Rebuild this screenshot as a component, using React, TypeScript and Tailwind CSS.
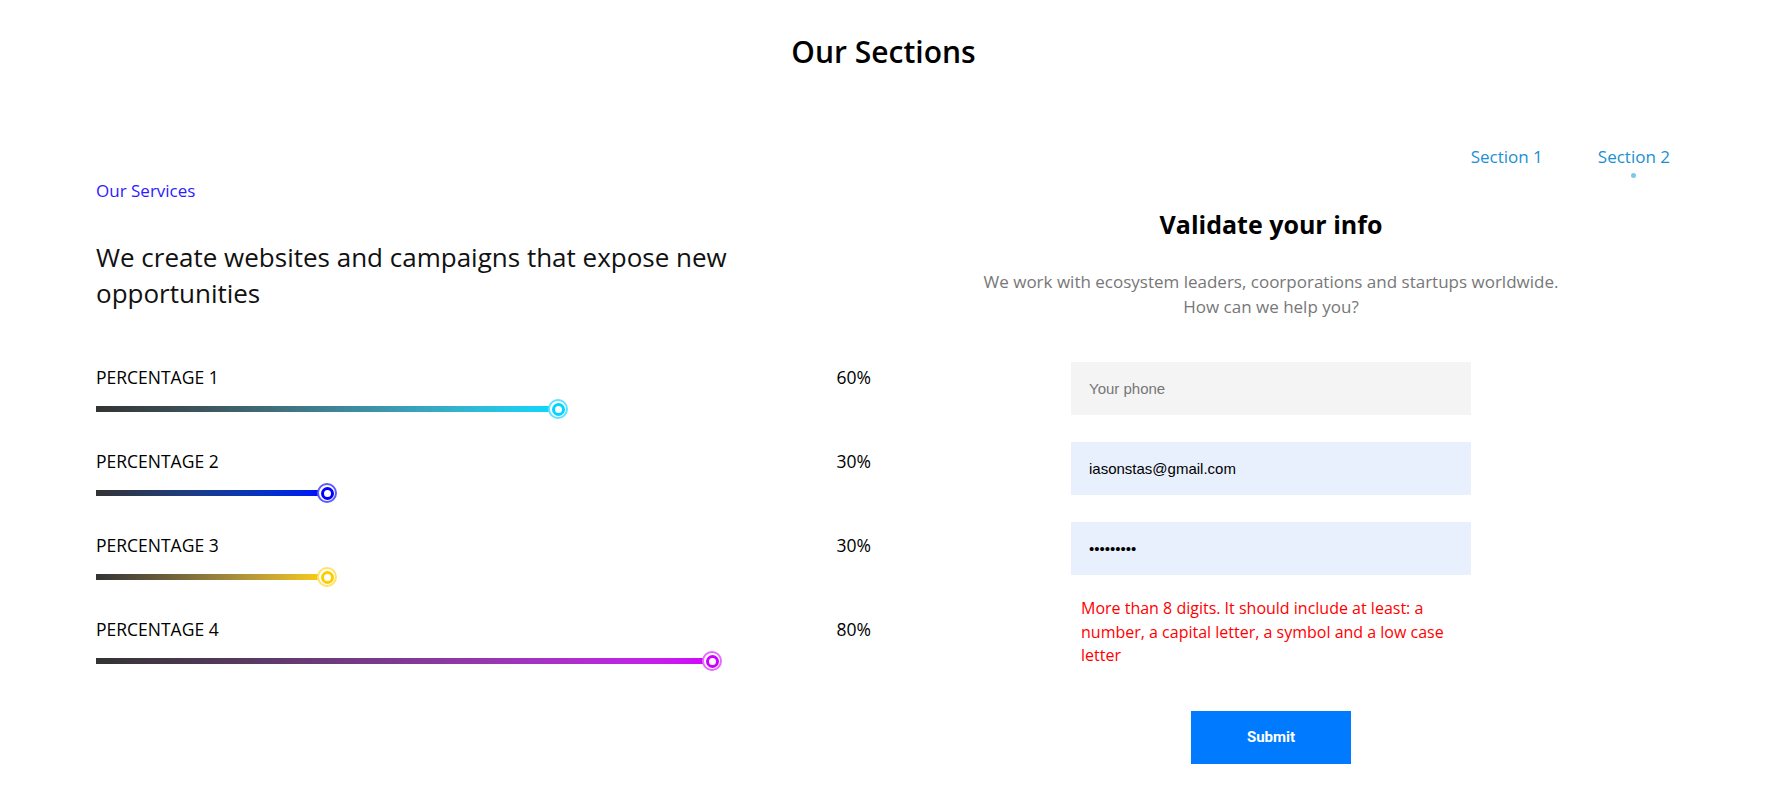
import React from "react";

type Item = { label: string; pct: number; bar: string; ring: string; inner: string };

const items: Item[] = [
  {
    label: "PERCENTAGE 1",
    pct: 60,
    bar: "bg-linear-to-r from-[#333333] to-[#00d9ff]",
    ring: "border-[#5fe3ff]",
    inner: "border-[#00d4ff]",
  },
  {
    label: "PERCENTAGE 2",
    pct: 30,
    bar: "bg-linear-to-r from-[#333333] to-[#0000ff]",
    ring: "border-[#5a5aff]",
    inner: "border-[#0000ff]",
  },
  {
    label: "PERCENTAGE 3",
    pct: 30,
    bar: "bg-linear-to-r from-[#333333] to-[#ffd000]",
    ring: "border-[#ffe266]",
    inner: "border-[#ffcc00]",
  },
  {
    label: "PERCENTAGE 4",
    pct: 80,
    bar: "bg-linear-to-r from-[#333333] to-[#d400ff]",
    ring: "border-[#e36bff]",
    inner: "border-[#cc00ff]",
  },
];

function Bar({ item }: { item: Item }) {
  return (
    <div>
      <div className="flex justify-between text-[17.5px] leading-[24px] font-medium text-black">
        <span>{item.label}</span>
        <span>{item.pct}%</span>
      </div>
      <div className="mt-[10px] flex h-[20px] w-[770px] items-center">
        <div className={`h-[6px] ${item.bar}`} style={{ width: `${item.pct}%` }} />
        <div
          className={`-ml-[10px] flex h-[20px] w-[20px] shrink-0 items-center justify-center rounded-full border-2 bg-white ${item.ring}`}
        >
          <div className={`h-[13px] w-[13px] rounded-full border-[3.5px] bg-white ${item.inner}`} />
        </div>
      </div>
    </div>
  );
}

export default function App() {
  return (
    <div className="min-h-screen w-full bg-white font-['Open_Sans',sans-serif] text-[#111]">
      <h1 className="pt-[33px] pr-[16px] text-center text-[30px] leading-[38px] font-semibold text-black">
        Our Sections
      </h1>

      <nav className="mt-[74px] flex items-start justify-end gap-[55px] pr-[113px] text-[17px] leading-[24px] text-[#1b8fd2]">
        <a className="flex flex-col items-center">Section 1</a>
        <a className="flex flex-col items-center">
          Section 2
          <span className="mt-[4px] h-[5px] w-[5px] rounded-full bg-[#7cc7ee]" />
        </a>
      </nav>

      <div className="flex">
        <div className="ml-[96px] w-[775px] shrink-0">
          <p className="pt-[1px] text-[17px] leading-[24px] text-[#2b1bff]">Our Services</p>
          <h2 className="mt-[36px] max-w-[720px] text-[26px] leading-[36px] font-medium text-[#111]">
            We create websites and campaigns that expose new opportunities
          </h2>
          <div className="mt-[54px] flex flex-col gap-[30px]">
            {items.map((it) => (
              <Bar key={it.label} item={it} />
            ))}
          </div>
        </div>

        <div className="mr-[112px] flex flex-1 flex-col items-center pt-[29px]">
          <h3 className="text-[25px] leading-[34px] font-bold text-black">Validate your info</h3>
          <p className="mt-[28px] text-center text-[17px] leading-[25px] text-[#777]">
            We work with ecosystem leaders, coorporations and startups worldwide.
            <br />
            How can we help you?
          </p>

          <form className="mt-[43px] flex w-[400px] flex-col font-['Liberation_Sans',Arial,sans-serif] text-[15px]">
            <input
              type="text"
              placeholder="Your phone"
              className="h-[53px] w-full bg-[#f4f4f4] px-[18px] text-black outline-none placeholder:text-[#777]"
            />
            <input
              type="email"
              value="iasonstas@gmail.com"
              readOnly
              className="mt-[27px] h-[53px] w-full bg-[#e8f0fe] px-[18px] text-black outline-none"
            />
            <input
              type="password"
              value="123456789"
              readOnly
              className="mt-[27px] h-[53px] w-full bg-[#e8f0fe] px-[18px] text-black outline-none"
            />
            <p className="mt-[22px] px-[10px] font-['Open_Sans',sans-serif] text-[16px] leading-[23.5px] text-[#ff0000]">
              More than 8 digits. It should include at least: a number, a capital letter, a symbol and a low case letter
            </p>
            <div className="mt-[43px] flex justify-center">
              <button
                type="button"
                className="h-[53px] w-[160px] bg-[#007bff] font-['Roboto',sans-serif] text-[15px] font-bold text-white"
              >
                Submit
              </button>
            </div>
          </form>
        </div>
      </div>
    </div>
  );
}
